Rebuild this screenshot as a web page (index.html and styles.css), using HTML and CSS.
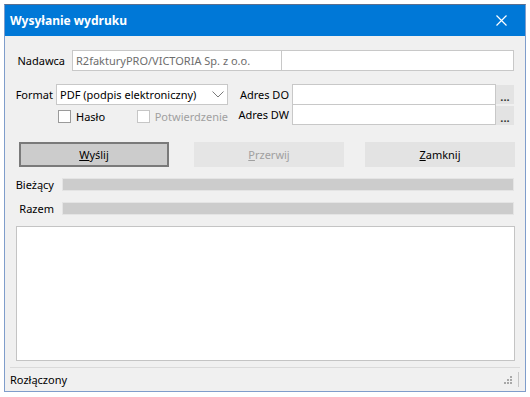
FILE: index.html
```html
<!DOCTYPE html>
<html lang="pl">
<head>
<meta charset="utf-8">
<title>Wysyłanie wydruku</title>
<link rel="stylesheet" href="styles.css">
</head>
<body>
<div class="window">
  <div class="titlebar">
    <span class="title">Wysyłanie wydruku</span>
    <svg class="close" width="11" height="11" viewBox="0 0 11 11"><path d="M0.5 0.5 L10.5 10.5 M10.5 0.5 L0.5 10.5" stroke="#ffffff" stroke-width="1.2" fill="none"/></svg>
  </div>
  <div class="content">
    <div class="row sender-row">
      <span class="lbl lbl-sender">Nadawca</span>
      <div class="field sender1 readonly">R2fakturyPRO/VICTORIA Sp. z o.o.</div>
      <div class="field sender2"></div>
    </div>
    <div class="row format-row">
      <div class="left-block">
        <div class="line">
          <span class="lbl lbl-format">Format</span>
          <div class="select">
            <span class="select-text">PDF (podpis elektroniczny)</span>
            <svg class="chevron" width="12" height="7" viewBox="0 0 12 7"><path d="M0.5 0.5 L6 6 L11.5 0.5" stroke="#7a7a7a" stroke-width="1" fill="none"/></svg>
          </div>
        </div>
        <div class="checks">
          <div class="check-item first">
            <span class="cb"></span><span class="cb-label">Hasło</span>
          </div>
          <div class="check-item">
            <span class="cb cb-disabled"></span><span class="cb-label disabled">Potwierdzenie</span>
          </div>
        </div>
      </div>
      <div class="right-block">
        <div class="line">
          <span class="lbl lbl-addr">Adres DO</span>
          <div class="field addr"></div>
          <div class="dots">...</div>
        </div>
        <div class="line second">
          <span class="lbl lbl-addr">Adres DW</span>
          <div class="field addr"></div>
          <div class="dots">...</div>
        </div>
      </div>
    </div>
    <div class="row buttons">
      <div class="btn btn-default"><span class="u">W</span>yślij</div>
      <div class="btn btn-disabled btn-gap1"><span class="u">P</span>rzerwij</div>
      <div class="btn btn-normal btn-gap2"><span class="u">Z</span>amknij</div>
    </div>
    <div class="row bar-row first-bar">
      <span class="lbl lbl-bar">Bieżący</span>
      <div class="bar"></div>
    </div>
    <div class="row bar-row second-bar">
      <span class="lbl lbl-bar">Razem</span>
      <div class="bar"></div>
    </div>
    <div class="log"></div>
  </div>
  <div class="status">
    <span class="status-text">Rozłączony</span>
    <svg class="grip" width="9" height="9" viewBox="0 0 9 9">
      <rect x="6" y="0" width="2" height="2" fill="#a8a8a8"/>
      <rect x="3" y="3" width="2" height="2" fill="#a8a8a8"/>
      <rect x="6" y="3" width="2" height="2" fill="#a8a8a8"/>
      <rect x="0" y="6" width="2" height="2" fill="#a8a8a8"/>
      <rect x="3" y="6" width="2" height="2" fill="#a8a8a8"/>
      <rect x="6" y="6" width="2" height="2" fill="#a8a8a8"/>
    </svg>
    <span class="status-sep"></span>
  </div>
</div>
</body>
</html>
```
FILE: styles.css
```css
html, body {
  margin: 0;
  padding: 0;
  background: #ffffff;
}
body {
  font-family: "Noto Sans", "Open Sans", sans-serif;
  font-size: 11px;
  color: #000000;
}
.window {
  margin: 4px 0 0 4px;
  width: 522px;
  height: 388px;
  box-sizing: border-box;
  border: 1px solid #7f9dcb;
  border-top-color: #5a6f8f;
  background: #f0f0f0;
  display: flex;
  flex-direction: column;
}
.titlebar {
  height: 31px;
  background: #0078d7;
  display: flex;
  align-items: center;
  padding: 0 0 0 5px;
  flex-shrink: 0;
}
.title {
  color: #ffffff;
  font-weight: bold;
  font-size: 12px;
  flex: 1;
}
.close {
  margin-right: 18px;
}
.content {
  display: flex;
  flex-direction: column;
}
.row {
  display: flex;
  align-items: center;
}
.lbl {
  text-align: right;
  white-space: nowrap;
}
.field {
  box-sizing: border-box;
  height: 21px;
  border: 1px solid #c8c8c8;
  background: #ffffff;
  display: flex;
  align-items: center;
  padding-left: 3px;
  white-space: nowrap;
}
.readonly {
  color: #6d6d6d;
}
.sender-row {
  margin-top: 14px;
}
.lbl-sender {
  width: 60px;
  margin-right: 7px;
}
.sender1 {
  width: 210px;
}
.sender2 {
  width: 233px;
  margin-left: -1px;
}
.format-row {
  margin-top: 13px;
  align-items: flex-start;
}
.left-block {
  display: flex;
  flex-direction: column;
  width: 223px;
}
.line {
  display: flex;
  align-items: center;
}
.lbl-format {
  width: 48px;
  margin-right: 3px;
}
.select {
  box-sizing: border-box;
  width: 172px;
  height: 21px;
  border: 1px solid #c8c8c8;
  background: #ffffff;
  display: flex;
  align-items: center;
  padding-left: 3px;
  padding-right: 3px;
}
.select-text {
  flex: 1;
}
.checks {
  display: flex;
  align-items: center;
  margin-top: 5px;
  padding-left: 53px;
  height: 13px;
}
.check-item {
  display: flex;
  align-items: center;
}
.check-item.first {
  width: 85px;
}
.cb {
  box-sizing: border-box;
  width: 13px;
  height: 13px;
  border: 1px solid #9a9a9a;
  background: #ffffff;
}
.cb-disabled {
  border-color: #c6c6c6;
}
.cb-label {
  margin-left: 5px;
}
.disabled {
  color: #a0a0a0;
}
.right-block {
  display: flex;
  flex-direction: column;
}
.line.second {
  margin-top: -1px;
}
.lbl-addr {
  width: 61px;
  margin-right: 3px;
}
.addr {
  width: 204px;
}
.dots {
  box-sizing: border-box;
  width: 18px;
  height: 19px;
  background: #e3e3e3;
  display: flex;
  align-items: flex-end;
  justify-content: center;
  padding-bottom: 2px;
  line-height: 1;
  font-weight: bold;
  color: #333333;
}
.line.second .dots {
  margin-top: 2px;
}
.buttons {
  margin-top: 17px;
  padding-left: 14px;
}
.btn {
  box-sizing: border-box;
  width: 150px;
  height: 25px;
  display: flex;
  align-items: center;
  justify-content: center;
}
.u {
  text-decoration: underline;
}
.btn-default {
  background: #cccccc;
  border: 2px solid #7a7a7a;
}
.btn-disabled {
  background: #e5e5e5;
  color: #a0a0a0;
}
.btn-normal {
  background: #e3e3e3;
}
.btn-gap1 {
  margin-left: 25px;
}
.btn-gap2 {
  margin-left: 21px;
}
.bar-row {
  height: 13px;
  line-height: 13px;
}
.bar-row.first-bar {
  margin-top: 11px;
}
.bar-row.second-bar {
  margin-top: 11px;
}
.lbl-bar {
  width: 49px;
  margin-right: 8px;
}
.bar {
  box-sizing: border-box;
  width: 452px;
  height: 13px;
  background: #cccccc;
  border: 1px solid #e4e4e4;
}
.log {
  box-sizing: border-box;
  margin-top: 11px;
  margin-left: 11px;
  width: 499px;
  height: 135px;
  background: #ffffff;
  border: 1px solid #c4c4c4;
}
.status {
  margin: 6px 5px 0 5px;
  border-top: 1px solid #dadada;
  display: flex;
  align-items: center;
  padding-top: 3px;
  height: 17px;
}
.status-text {
  flex: 1;
}
.grip {
  margin-right: 5px;
  margin-top: 2px;
}
.status-sep {
  width: 1px;
  height: 15px;
  background: #c6c6c6;
  margin-right: 1px;
}
```
